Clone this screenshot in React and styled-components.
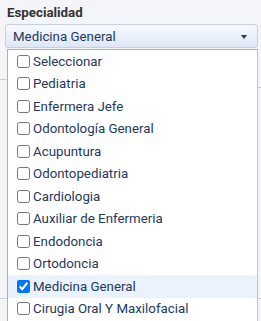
import React, { useState } from "react";
import styled, { createGlobalStyle } from "styled-components";

const Global = createGlobalStyle`
  html, body { margin: 0; padding: 0; background: #f3f5f8; }
  body { font-family: Roboto, "Liberation Sans", sans-serif; overflow: hidden; }
  * { box-sizing: border-box; }
`;

const Page = styled.div`
  position: relative;
  width: 261px;
  height: 321px;
  overflow: hidden;
`;

const Field = styled.div`
  display: flex;
  flex-direction: column;
  padding: 5px 3px 0 5px;
`;

const Label = styled.div`
  font-size: 13.3px;
  font-weight: 700;
  color: #333;
  line-height: 16px;
  padding-left: 2px;
  margin-bottom: 3px;
`;

const Select = styled.div`
  height: 24px;
  border: 1px solid #c3d1e2;
  border-radius: 3px;
  background: linear-gradient(#f7faff, #dde7f4);
  display: flex;
  align-items: center;
  justify-content: space-between;
  padding: 0 10px 0 7px;
  color: #23395d;
  font-size: 13.3px;
`;

const Arrow = styled.span`
  width: 0;
  height: 0;
  margin-top: 1px;
  border-left: 3.5px solid transparent;
  border-right: 3.5px solid transparent;
  border-top: 4px solid #23395d;
`;

const BgRows = styled.div`
  display: flex;
  margin-top: 31px;
`;

const BgLeft = styled.div`
  flex: 1;
  border-top: 1px solid #c9cdd2;
`;

const BgRight = styled.div`
  flex: 1;
  margin-top: 8px;
  border-top: 1px solid #c9cdd2;
`;

const BgBottom = styled.div`
  margin-top: 210px;
  border-top: 1px solid #c9cdd2;
`;

const Menu = styled.ul`
  position: absolute;
  left: 7px;
  top: 49px;
  width: 251px;
  margin: 0;
  padding: 0;
  list-style: none;
  background: #fff;
  border: 1px solid #a9b1ba;
  border-right-color: #b3c7de;
  border-bottom: none;
  height: 280px;
`;

const Item = styled.li`
  height: 22.5px;
  display: flex;
  align-items: center;
  padding-left: 5px;
  font-size: 13.3px;
  color: #23395d;
  background: ${(p) => (p.$checked ? "#eaf2fc" : "transparent")};
  white-space: nowrap;
  cursor: pointer;

  input {
    width: 13px;
    height: 13px;
    margin: 0 3px 0 4px;
  }
`;

const options = [
  "Seleccionar",
  "Pediatria",
  "Enfermera Jefe",
  "Odontología General",
  "Acupuntura",
  "Odontopediatria",
  "Cardiologia",
  "Auxiliar de Enfermeria",
  "Endodoncia",
  "Ortodoncia",
  "Medicina General",
  "Cirugia Oral Y Maxilofacial",
];

export default function App() {
  const [selected, setSelected] = useState("Medicina General");
  return (
    <Page>
      <Global />
      <Field>
        <Label>Especialidad</Label>
        <Select>
          <span>{selected}</span>
          <Arrow />
        </Select>
      </Field>
      <BgRows>
        <BgLeft />
        <BgRight />
      </BgRows>
      <BgBottom />
      <Menu>
        {options.map((o) => (
          <Item key={o} $checked={o === selected} onClick={() => setSelected(o)}>
            <input type="checkbox" checked={o === selected} readOnly />
            {o}
          </Item>
        ))}
      </Menu>
    </Page>
  );
}
